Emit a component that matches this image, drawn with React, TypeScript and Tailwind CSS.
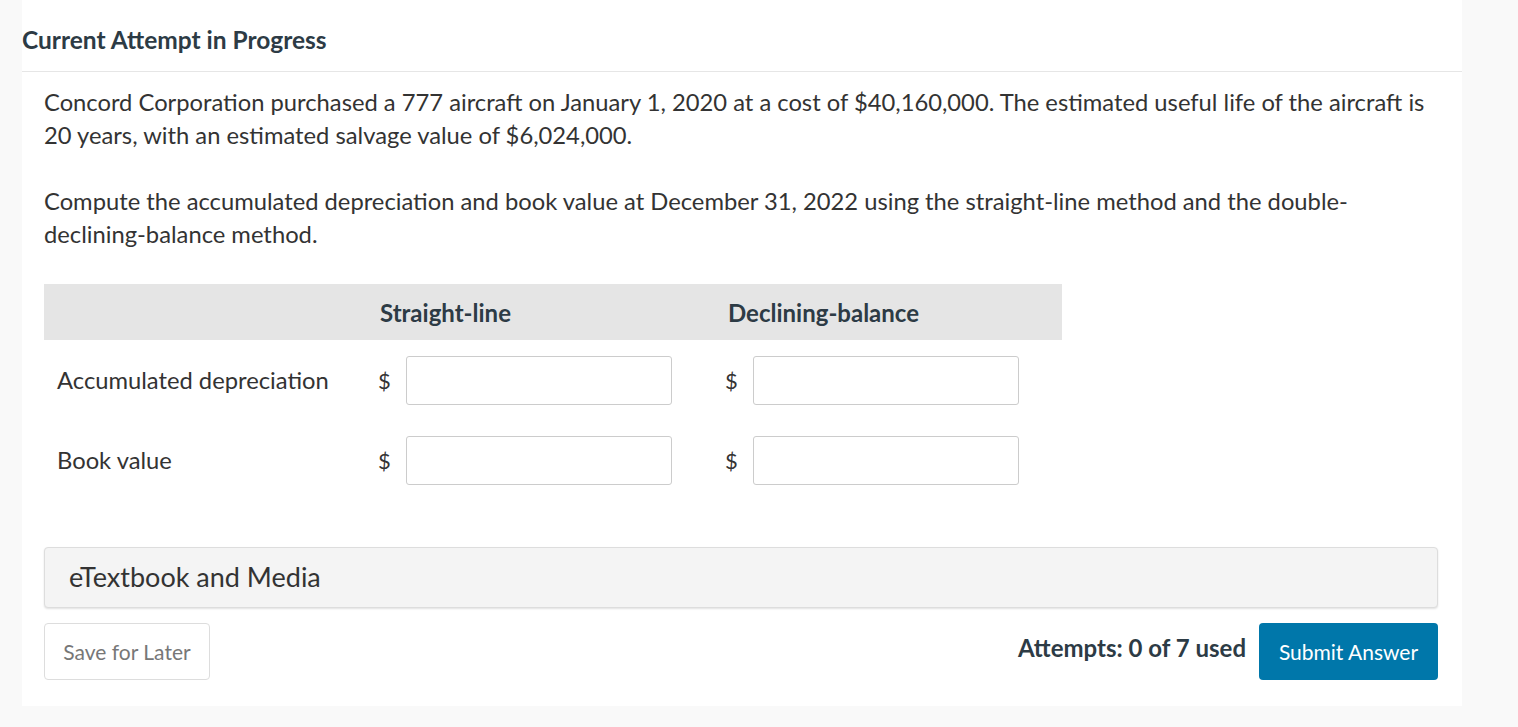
import React from 'react';

const font = { fontFamily: 'Lato, "Open Sans", sans-serif' };

function MoneyCell() {
  return (
    <div className="flex items-center h-20 pl-[8px]">
      <span className="w-[28px] text-[22px] text-[#333]">$</span>
      <input
        type="text"
        className="w-[266px] h-[49px] border border-[#cccccc] rounded-[3px] bg-white outline-none px-2 text-[20px]"
      />
    </div>
  );
}

export default function App() {
  return (
    <div className="min-h-screen w-full bg-[#f9f9f9]" style={font}>
      <div className="ml-[22px] w-[1440px] bg-white pb-[26px]">
        {/* Title */}
        <div className="pt-[26px] pb-[17px] border-b border-[#e6e6e6]">
          <h2 className="text-[24.5px] font-bold text-[#2d3b45] leading-[28px]">Current Attempt in Progress</h2>
        </div>

        <div className="pl-[22px] pr-[24px]">
          <p className="mt-[14px] text-[23.75px] leading-[33px] text-[#333]">
            Concord Corporation purchased a 777 aircraft on January 1, 2020 at a cost of $40,160,000. The estimated useful life of the aircraft is 20 years, with an estimated salvage value of $6,024,000.
          </p>
          <p className="mt-[33px] text-[23.75px] leading-[33px] text-[#333]">
            Compute the accumulated depreciation and book value at December 31, 2022 using the straight-line method and the double-declining-balance method.
          </p>

          {/* Table */}
          <div className="mt-[33px] w-[1018px]">
            <div className="grid grid-cols-[326px_348px_344px] h-[56px] items-center bg-[#e5e5e5]">
              <div />
              <div className="pl-[10px] pt-[2px] text-[24px] font-bold text-[#2d3b45]">Straight-line</div>
              <div className="pl-[10px] pt-[2px] text-[24px] font-bold text-[#2d3b45]">Declining-balance</div>
            </div>
            <div className="grid grid-cols-[326px_347px_345px] items-center">
              <div className="pl-[13px] pt-[2px] text-[23.75px] text-[#333]">Accumulated depreciation</div>
              <MoneyCell />
              <MoneyCell />
            </div>
            <div className="grid grid-cols-[326px_347px_345px] items-center">
              <div className="pl-[13px] pt-[2px] text-[23.75px] text-[#333]">Book value</div>
              <MoneyCell />
              <MoneyCell />
            </div>
          </div>

          {/* eTextbook */}
          <div className="mt-[47px] h-[61px] flex items-center px-[24px] bg-[#f4f4f4] border border-[#dddddd] rounded-[4px] shadow-[0_1px_2px_rgba(0,0,0,0.12)]">
            <span className="text-[27px] text-[#333]">eTextbook and Media</span>
          </div>

          {/* Footer */}
          <div className="mt-[15px] flex items-center justify-between">
            <button className="h-[57px] w-[166px] border border-[#dddddd] rounded-[4px] bg-white text-[21px] text-[#777777]">
              Save for Later
            </button>
            <div className="flex items-center gap-[13px]">
              <span className="pb-[7px] text-[24px] font-bold text-[#2d3b45]">Attempts: 0 of 7 used</span>
              <button className="h-[57px] w-[179px] rounded-[4px] bg-[#0077aa] text-[21px] text-white">
                Submit Answer
              </button>
            </div>
          </div>
        </div>
      </div>
    </div>
  );
}
